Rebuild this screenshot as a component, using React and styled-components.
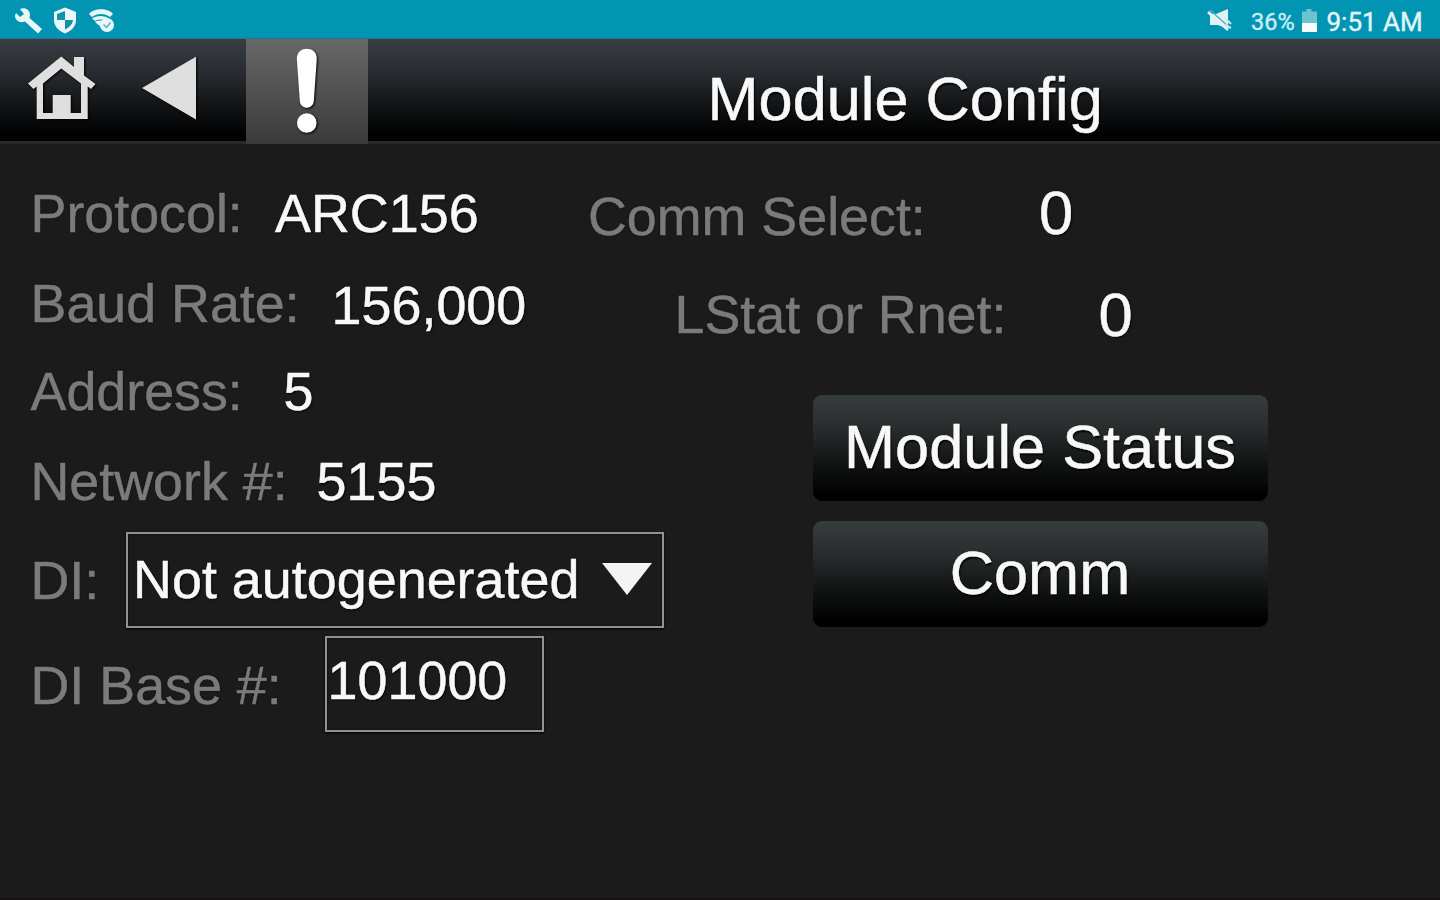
import React from "react";
import styled, { createGlobalStyle } from "styled-components";

const GlobalStyle = createGlobalStyle`
  * { box-sizing: border-box; }
  body { margin: 0; background: #1b1b1b; overflow: hidden; }
`;

const Screen = styled.div`
  display: flex;
  flex-direction: column;
  width: 1440px;
  height: 900px;
  background: #1b1b1b;
  border-bottom: 2px solid #161114;
  font-family: "Liberation Sans", Arial, sans-serif;
  color: #f8f8f8;
`;

const StatusBar = styled.div`
  display: flex;
  justify-content: space-between;
  height: 39px;
  background: #0295b3;
  border-bottom: 1px solid #24788a;
`;

const StatusGroup = styled.div`
  display: flex;
  align-items: flex-start;
`;

const StatusText = styled.span`
  font-family: Roboto, sans-serif;
  font-size: ${(p) => p.$size}px;
  line-height: 30px;
  width: ${(p) => p.$width}px;
  margin-top: 7px;
  color: ${(p) => p.$color};
  -webkit-text-stroke: 0.4px ${(p) => p.$color};
  white-space: nowrap;
`;

const Header = styled.header`
  display: flex;
  height: 105px;
  background: linear-gradient(#383d44 0%, #292d31 32%, #111315 66%, #000 96%);
  border-bottom: 3px solid #29292a;
`;

const NavButton = styled.button`
  display: block;
  flex: none;
  width: ${(p) => p.$width}px;
  height: ${(p) => (p.$active ? 105 : 102)}px;
  padding: 0;
  border: 0;
  background: ${(p) => (p.$active ? "linear-gradient(#686868, #3a3a3a)" : "transparent")};
  svg { display: block; filter: drop-shadow(1px 1px 1px #000); }
`;

const Title = styled.h1`
  margin: 26px 0 0 339.5px;
  font-size: 61.3px;
  line-height: 68px;
  font-weight: 400;
  white-space: nowrap;
  font-variant-ligatures: none;
  -webkit-text-stroke: 0.5px #f8f8f8;
  text-shadow: 1px 2px 2px #000;
`;

const Content = styled.main`
  display: flex;
`;

const Column = styled.section`
  display: flex;
  flex-direction: column;
  flex: none;
  width: ${(p) => p.$width}px;
`;

const Row = styled.div`
  display: flex;
  align-items: flex-start;
  height: ${(p) => p.$height}px;
  padding-left: ${(p) => p.$indent}px;
`;

const Label = styled.label`
  flex: none;
  width: ${(p) => p.$width}px;
  margin-top: ${(p) => p.$top}px;
  font-size: 53.8px;
  line-height: 60px;
  color: #7b7b7b;
  -webkit-text-stroke: 0.5px #7b7b7b;
  white-space: nowrap;
  text-shadow: 0 0 2px #101010;
`;

const Value = styled.span`
  margin-top: ${(p) => p.$top}px;
  font-size: ${(p) => (p.$large ? 61.5 : 53.9)}px;
  line-height: 60px;
  -webkit-text-stroke: 0.5px #f8f8f8;
  white-space: nowrap;
  text-shadow: 1px 1px 2px #000;
`;

const Field = styled.div`
  display: flex;
  justify-content: space-between;
  flex: none;
  width: ${(p) => p.$width}px;
  height: 96px;
  border: 2px solid #929292;
  padding: 0 10px 0 ${(p) => p.$pad}px;
  box-shadow: 0 1px 2px #000, inset 0 0 2px #000;
`;

const Arrow = styled.svg`
  width: 50px;
  height: 32px;
  margin-top: 29px;
`;

const Actions = styled.div`
  display: flex;
  flex-direction: column;
  gap: 20px;
  margin-left: 252.5px;
`;

const ActionButton = styled.button`
  width: 455px;
  height: 106px;
  padding: 0 0 1px;
  border: 0;
  border-radius: 9px;
  background: linear-gradient(#373c3d 0%, #292d2e 30%, #111313 66%, #000 95%);
  color: #f8f8f8;
  font-family: inherit;
  font-size: 61.3px;
  line-height: 68px;
  -webkit-text-stroke: 0.5px #f8f8f8;
  text-shadow: 1px 2px 2px #000;
`;

const SystemIcons = () => (
  <svg width="130" height="38" viewBox="0 0 130 38" fill="#e9f7f9">
    <path d="M16 13l4 4 4-3-4-5c5-2 10 1 10 6l-.5 3L42 29l-4 4.500L25 21.500c-5 2-10-1-10-6z" />
    <path d="M65 7.500L54 12v8c0 6 4 10.500 11 13.500C72 30.500 76 26 76 20v-8z" />
    <path d="M65 11v9h-8v-6zM65 20h8c-.5 4-3 7-8 9.500z" fill="#168fa9" />
    <path d="M89 14c4-6.500 20-6.500 24 0l-3 3c-5-4-13-4-18 0zM92 18.500c4-3.500 13-3.500 17 0l-3 2.500c-3-2-8-2-11 0zM95 22c3-2 7-2 9 0l-3 5z" />
    <circle cx="107" cy="25" r="7" />
    <path d="M103.500 24.500l3 3 4-5" fill="none" stroke="#4fb3c6" strokeWidth="1.500" />
  </svg>
);

const MuteIcon = () => (
  <svg width="44" height="38" viewBox="0 0 44 38">
    <path d="M3 14h6l12-5v20l-10-4H3z" fill="#dff3f6" />
    <path d="M3 10l20 18" stroke="#4fb3c6" strokeWidth="1.500" />
    <path d="M1 12l20 18" stroke="#e5f5f7" strokeWidth="2.500" />
    <path d="M18 25l6 3M19 19l5 5" stroke="#cdecf0" strokeWidth="2" />
  </svg>
);

const BatteryIcon = () => (
  <svg width="24.500" height="38" viewBox="0 0 24.500 38">
    <path d="M4.500 9h5v2.500H15V24H0V11.500h4.500z" fill="#6cc4d0" />
    <path d="M0 23h15v9H0z" fill="#f6fcfd" />
  </svg>
);

const HomeIcon = () => (
  <svg width="123" height="102" viewBox="0 39 123 102" fill="#dfdfdf">
    <path
      fillRule="evenodd"
      d="M61.300 56.500L74 67V57h10v18.500L95.500 84l-4.500 5-3.300-2.500V119h-51V86.500L33.500 89 28 83.500zM61.300 68.500L43 83.500V113h9.700V95h18v18H81V83.500z"
    />
  </svg>
);

const BackIcon = () => (
  <svg width="122.500" height="102" viewBox="123 39 122.500 102">
    <path d="M142 88L196 56.700v62.800z" fill="#dfdfdf" />
  </svg>
);

const AlertIcon = () => (
  <svg width="122.500" height="105" viewBox="245.500 39 122.500 105" fill="#fff">
    <path d="M296.300 58.500c0-13 20-13 20 0l-3 42.500c-.7 9-13.300 9-14 0z" />
    <circle cx="306.300" cy="123" r="9.800" />
  </svg>
);

export default function App() {
  return (
    <>
      <GlobalStyle />
      <Screen>
        <StatusBar>
          <SystemIcons />
          <StatusGroup>
            <MuteIcon />
            <StatusText $size={23.5} $width={51} $color="#c9edf2">36%</StatusText>
            <BatteryIcon />
            <StatusText $size={26} $width={113.5} $color="#e2f6f8">9:51 AM</StatusText>
          </StatusGroup>
        </StatusBar>
        <Header>
          <NavButton $width={123} aria-label="Home"><HomeIcon /></NavButton>
          <NavButton $width={122.5} aria-label="Back"><BackIcon /></NavButton>
          <NavButton $width={122.5} $active aria-label="Alerts"><AlertIcon /></NavButton>
          <Title>Module Config</Title>
        </Header>
        <Content>
          <Column $width={560}>
            <Row $height={90} $indent={30.5}>
              <Label $width={244.5} $top={39}>Protocol:</Label>
              <Value $top={39}>ARC156</Value>
            </Row>
            <Row $height={88} $indent={30.5}>
              <Label $width={301} $top={39}>Baud Rate:</Label>
              <Value $top={41}>156,000</Value>
            </Row>
            <Row $height={89} $indent={30.5}>
              <Label $width={253} $top={39}>Address:</Label>
              <Value $top={39}>5</Value>
            </Row>
            <Row $height={121} $indent={30.5}>
              <Label $width={286} $top={40}>Network #:</Label>
              <Value $top={40}>5155</Value>
            </Row>
            <Row $height={104} $indent={30.5}>
              <Label $width={95.5} $top={18}>DI:</Label>
              <Field $width={538} $pad={5}>
                <Value $top={15}>Not autogenerated</Value>
                <Arrow viewBox="0 0 50 32"><path d="M0 0h50L25 32z" fill="#f4f4f4" /></Arrow>
              </Field>
            </Row>
            <Row $height={96} $indent={30.5}>
              <Label $width={294} $top={19}>DI Base #:</Label>
              <Field $width={219} $pad={1}>
                <Value $top={12}>101000</Value>
              </Field>
            </Row>
          </Column>
          <Column $width={880}>
            <Row $height={98} $indent={28}>
              <Label $width={451} $top={42}>Comm Select:</Label>
              <Value $large $top={39}>0</Value>
            </Row>
            <Row $height={152.5} $indent={114.5}>
              <Label $width={424} $top={42}>LStat or Rnet:</Label>
              <Value $large $top={43}>0</Value>
            </Row>
            <Actions>
              <ActionButton>Module Status</ActionButton>
              <ActionButton>Comm</ActionButton>
            </Actions>
          </Column>
        </Content>
      </Screen>
    </>
  );
}
